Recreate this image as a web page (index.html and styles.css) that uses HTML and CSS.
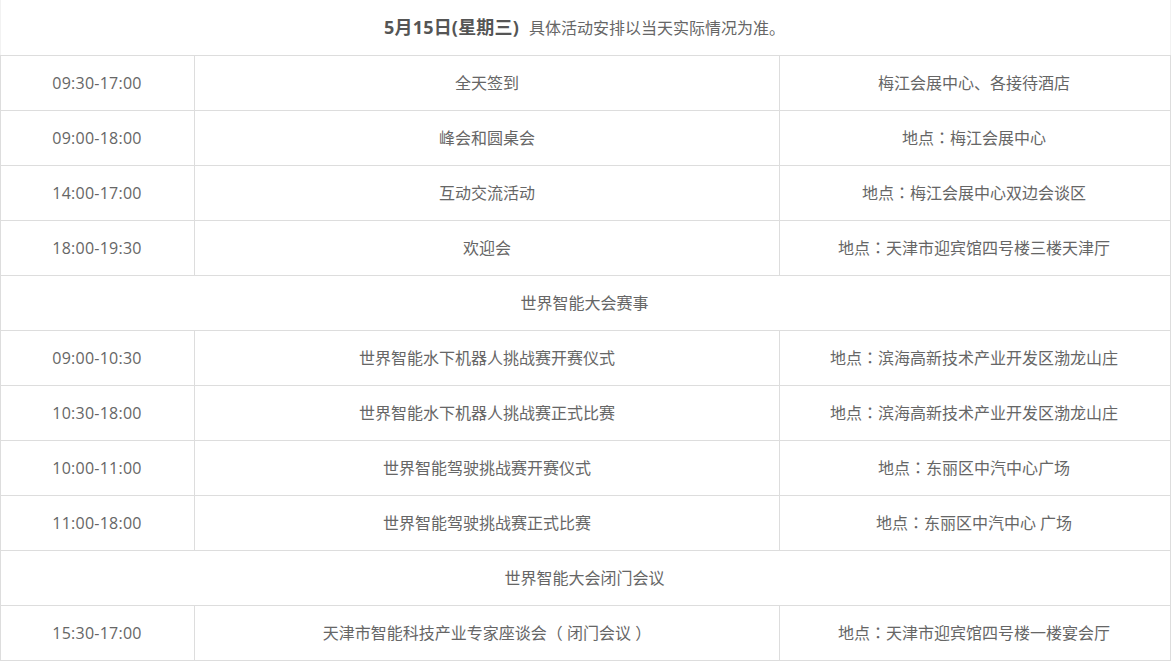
FILE: index.html
```html
<!DOCTYPE html>
<html lang="zh-CN">
<head>
<meta charset="utf-8">
<title>日程</title>
<link rel="stylesheet" href="styles.css">
</head>
<body>
<table class="schedule">
<colgroup><col class="col-time"><col class="col-event"><col class="col-place"></colgroup>
<tbody>
<tr><td colspan="3"><strong>5月15日(星期三)</strong><span class="note">具体活动安排以当天实际情况为准。</span></td></tr>
<tr><td class="time">09:30-17:00</td><td class="event">全天签到</td><td>梅江会展中心、各接待酒店</td></tr>
<tr><td class="time">09:00-18:00</td><td class="event">峰会和圆桌会</td><td>地点<span class="colon" lang="zh-TW">：</span>梅江会展中心</td></tr>
<tr><td class="time">14:00-17:00</td><td class="event">互动交流活动</td><td>地点<span class="colon" lang="zh-TW">：</span>梅江会展中心双边会谈区</td></tr>
<tr><td class="time">18:00-19:30</td><td class="event">欢迎会</td><td>地点<span class="colon" lang="zh-TW">：</span>天津市迎宾馆四号楼三楼天津厅</td></tr>
<tr><td colspan="3">世界智能大会赛事</td></tr>
<tr><td class="time">09:00-10:30</td><td class="event">世界智能水下机器人挑战赛开赛仪式</td><td>地点<span class="colon" lang="zh-TW">：</span>滨海高新技术产业开发区渤龙山庄</td></tr>
<tr><td class="time">10:30-18:00</td><td class="event">世界智能水下机器人挑战赛正式比赛</td><td>地点<span class="colon" lang="zh-TW">：</span>滨海高新技术产业开发区渤龙山庄</td></tr>
<tr><td class="time">10:00-11:00</td><td class="event">世界智能驾驶挑战赛开赛仪式</td><td>地点<span class="colon" lang="zh-TW">：</span>东丽区中汽中心广场</td></tr>
<tr><td class="time">11:00-18:00</td><td class="event">世界智能驾驶挑战赛正式比赛</td><td>地点<span class="colon" lang="zh-TW">：</span>东丽区中汽中心 广场</td></tr>
<tr><td colspan="3">世界智能大会闭门会议</td></tr>
<tr><td class="time">15:30-17:00</td><td class="event">天津市智能科技产业专家座谈会（ 闭门会议 ）</td><td>地点<span class="colon" lang="zh-TW">：</span>天津市迎宾馆四号楼一楼宴会厅</td></tr>
</tbody>
</table>
</body>
</html>
```
FILE: styles.css
```css
html, body {
  margin: 0;
  padding: 0;
  background: #fff;
}
.schedule {
  width: 1170px;
  border-collapse: collapse;
  table-layout: fixed;
  font-family: "Open Sans", "Noto Sans CJK SC", sans-serif;
  font-size: 16px;
  color: #666;
}
.col-time { width: 194px; }
.col-event { width: 585px; }
.col-place { width: 391px; }
.schedule td {
  height: 55px;
  padding: 0 2px 2px 0;
  box-sizing: border-box;
  border: 1px solid #ddd;
  text-align: center;
  vertical-align: middle;
}
.schedule tr:first-child td {
  border-top: 0;
  border-left-color: #f2f2f2;
  border-right-color: #f2f2f2;
}
.schedule td.time {
  padding: 0 1px 0 0;
  letter-spacing: 0.25px;
}
.schedule td.event {
  padding-right: 0;
}
.schedule strong {
  font-size: 18px;
  font-weight: 700;
  letter-spacing: 0.2px;
  color: #555;
}
.note {
  margin-left: 10px;
}
.colon {
  font-family: "Noto Sans CJK TC", sans-serif;
}
```
